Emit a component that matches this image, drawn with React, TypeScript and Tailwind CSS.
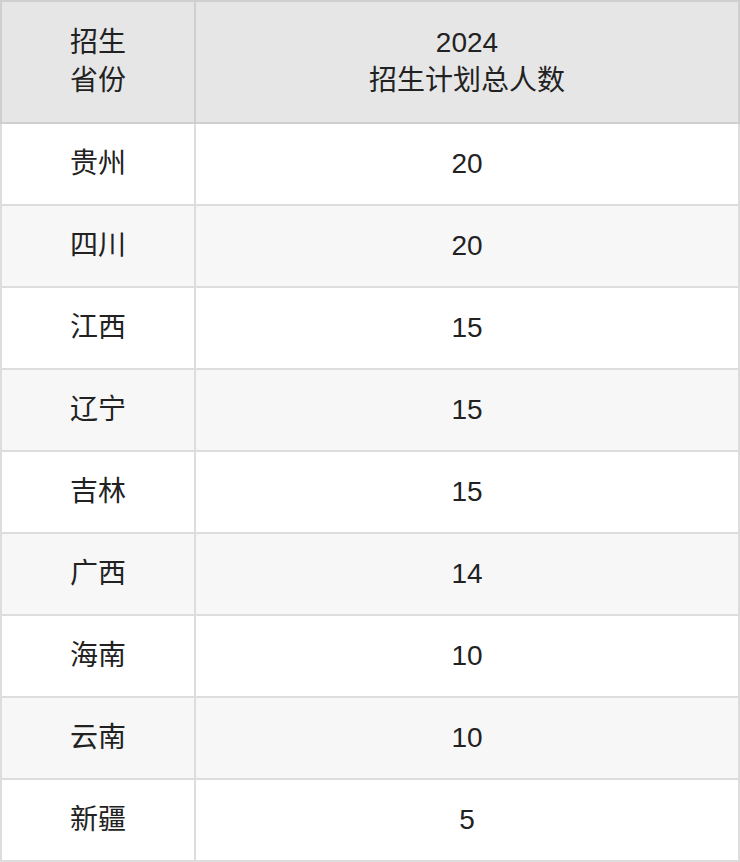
const rows: [string, string][] = [
  ["贵州", "20"],
  ["四川", "20"],
  ["江西", "15"],
  ["辽宁", "15"],
  ["吉林", "15"],
  ["广西", "14"],
  ["海南", "10"],
  ["云南", "10"],
  ["新疆", "5"],
];

export default function App() {
  return (
    <div
      className="w-[740px] bg-white text-[#222]"
      style={{ fontFamily: '"Liberation Sans", "Noto Sans CJK SC", sans-serif' }}
    >
      <table className="w-full border-collapse text-center text-[28px] leading-[38px]">
        <thead>
          <tr className="bg-[#e6e6e6]">
            <th className="h-[122px] w-[194px] border-2 border-[#cfcfcf] font-normal">
              招生
              <br />
              省份
            </th>
            <th className="h-[122px] border-2 border-[#cfcfcf] font-normal">
              2024
              <br />
              招生计划总人数
            </th>
          </tr>
        </thead>
        <tbody>
          {rows.map(([province, count], i) => (
            <tr key={province} className={i % 2 === 1 ? "bg-[#f7f7f7]" : "bg-white"}>
              <td className="h-[82px] border-2 border-[#dddddd]">{province}</td>
              <td className="h-[82px] border-2 border-[#dddddd]">{count}</td>
            </tr>
          ))}
        </tbody>
      </table>
    </div>
  );
}
